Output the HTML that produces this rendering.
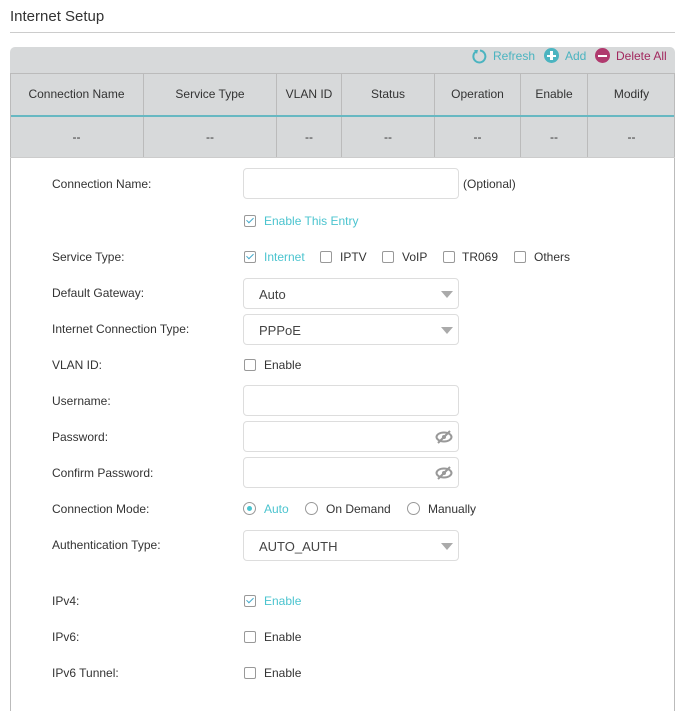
<!DOCTYPE html><html><head><style>
body{margin:0;width:685px;height:711px;background:#fff;font-family:"Liberation Sans",sans-serif;font-size:12px;color:#333;position:relative;overflow:hidden}
.a{position:absolute}
.t{position:absolute;line-height:14px;transform:translateY(-7px)}
.inp{position:absolute;left:243px;width:214px;height:29px;border:1px solid #ddd;border-radius:4px;background:#fff}
.sel span{position:absolute;left:15px;top:8px;font-size:13px;color:#444}
.sel i{position:absolute;right:5px;top:12px;border-left:6px solid transparent;border-right:6px solid transparent;border-top:7px solid #aaa}
.cb{position:absolute;width:10px;height:10px;border:1px solid #999;border-radius:2px;background:#fff}
.cb.on::after{content:"";position:absolute;left:3px;top:0px;width:3px;height:6px;border:solid #4ac;border-width:0 1.5px 1.5px 0;transform:rotate(45deg)}
.rd{position:absolute;width:11px;height:11px;border:1px solid #999;border-radius:50%}
.rd.on::after{content:"";position:absolute;left:3px;top:3px;width:5px;height:5px;border-radius:50%;background:#4bc4cf}
.c{color:#4bc4cf}
th,td{border-right:1px solid #bbb;font-weight:normal;text-align:center;padding:0}
</style></head><body>
<div class="t" style="left:10px;top:17px;font-size:15px">Internet Setup</div>
<div class="a" style="left:10px;top:32px;width:665px;height:1px;background:#ccc"></div>
<div class="a" style="left:10px;top:47px;width:665px;height:110px;background:#d7d9da;border-radius:5px 5px 0 0"></div>
<svg class="a" style="left:471px;top:48px" width="16" height="16" viewBox="0 0 16 16"><path d="M5 3.5A6 6 0 1 0 9 2.5" fill="none" stroke="#4bb4c0" stroke-width="2"/><path d="M3 2l4 0l-1 4z" fill="#4bb4c0"/></svg>
<div class="t c" style="left:493px;top:56px;color:#4bb4c0">Refresh</div>
<div class="a" style="left:544px;top:48px;width:15px;height:15px;border-radius:50%;background:#4bb4c0"></div>
<div class="a" style="left:547px;top:54.5px;width:9px;height:2.5px;background:#fff"></div><div class="a" style="left:550.3px;top:51px;width:2.5px;height:9px;background:#fff"></div>
<div class="t" style="left:565px;top:56px;color:#4bb4c0">Add</div>
<div class="a" style="left:595px;top:48px;width:15px;height:15px;border-radius:50%;background:#b03a6e"></div>
<div class="a" style="left:598px;top:54.5px;width:9px;height:2.5px;background:#fff"></div>
<div class="t" style="left:616px;top:56px;color:#a2285e">Delete All</div>
<table class="a" style="left:10px;top:73px;width:665px;border-collapse:collapse;font-size:12px;color:#333">
<tr style="height:42px;border-top:1px solid #bbb"><th style="width:133px">Connection Name</th><th style="width:132px">Service Type</th><th style="width:64px">VLAN ID</th><th style="width:92px">Status</th><th style="width:85px">Operation</th><th style="width:66px">Enable</th><th style="border-right:0">Modify</th></tr>
<tr style="height:41px;border-top:2px solid #67b8c2"><td>--</td><td>--</td><td>--</td><td>--</td><td>--</td><td>--</td><td style="border-right:0">--</td></tr></table>
<div class="a" style="left:10px;top:73px;width:1px;height:638px;background:#bbb"></div>
<div class="a" style="left:674px;top:73px;width:1px;height:638px;background:#bbb"></div>
<div class="a" style="left:10px;top:157px;width:665px;height:1px;background:#ccc"></div>

<div class="t" style="left:52px;top:184px">Connection Name:</div>
<div class="inp" style="top:168px"></div><div class="t" style="left:463px;top:184px">(Optional)</div>
<div class="cb on" style="left:244px;top:215px"></div><div class="t c" style="left:264px;top:221px">Enable This Entry</div>
<div class="t" style="left:52px;top:257px">Service Type:</div>
<div class="cb on" style="left:244px;top:251px"></div><div class="t c" style="left:264px;top:257px">Internet</div>
<div class="cb" style="left:320px;top:251px"></div><div class="t" style="left:340px;top:257px">IPTV</div>
<div class="cb" style="left:382px;top:251px"></div><div class="t" style="left:402px;top:257px">VoIP</div>
<div class="cb" style="left:443px;top:251px"></div><div class="t" style="left:462px;top:257px">TR069</div>
<div class="cb" style="left:514px;top:251px"></div><div class="t" style="left:534px;top:257px">Others</div>
<div class="t" style="left:52px;top:293px">Default Gateway:</div>
<div class="inp sel" style="top:278px"><span>Auto</span><i></i></div>
<div class="t" style="left:52px;top:329px">Internet Connection Type:</div>
<div class="inp sel" style="top:314px"><span>PPPoE</span><i></i></div>
<div class="t" style="left:52px;top:365px">VLAN ID:</div>
<div class="cb" style="left:244px;top:359px"></div><div class="t" style="left:264px;top:365px">Enable</div>
<div class="t" style="left:52px;top:401px">Username:</div><div class="inp" style="top:385px"></div>
<div class="t" style="left:52px;top:437px">Password:</div><div class="inp" style="top:421px"></div>
<div class="t" style="left:52px;top:473px">Confirm Password:</div><div class="inp" style="top:457px"></div>
<svg class="a" style="left:435px;top:430px" width="18" height="14" viewBox="0 0 18 14"><ellipse cx="9" cy="7" rx="7.5" ry="4.5" fill="none" stroke="#999" stroke-width="2"/><circle cx="9" cy="7" r="2" fill="#999"/><path d="M15 1L3 13" stroke="#999" stroke-width="2"/></svg>
<svg class="a" style="left:435px;top:466px" width="18" height="14" viewBox="0 0 18 14"><ellipse cx="9" cy="7" rx="7.5" ry="4.5" fill="none" stroke="#999" stroke-width="2"/><circle cx="9" cy="7" r="2" fill="#999"/><path d="M15 1L3 13" stroke="#999" stroke-width="2"/></svg>
<div class="t" style="left:52px;top:509px">Connection Mode:</div>
<div class="rd on" style="left:243px;top:502px"></div><div class="t c" style="left:264px;top:509px">Auto</div>
<div class="rd" style="left:305px;top:502px"></div><div class="t" style="left:326px;top:509px">On Demand</div>
<div class="rd" style="left:407px;top:502px"></div><div class="t" style="left:428px;top:509px">Manually</div>
<div class="t" style="left:52px;top:545px">Authentication Type:</div>
<div class="inp sel" style="top:530px"><span>AUTO_AUTH</span><i></i></div>
<div class="t" style="left:52px;top:601px">IPv4:</div>
<div class="cb on" style="left:244px;top:595px"></div><div class="t c" style="left:264px;top:601px">Enable</div>
<div class="t" style="left:52px;top:637px">IPv6:</div>
<div class="cb" style="left:244px;top:631px"></div><div class="t" style="left:264px;top:637px">Enable</div>
<div class="t" style="left:52px;top:673px">IPv6 Tunnel:</div>
<div class="cb" style="left:244px;top:667px"></div><div class="t" style="left:264px;top:673px">Enable</div>
</body></html>
